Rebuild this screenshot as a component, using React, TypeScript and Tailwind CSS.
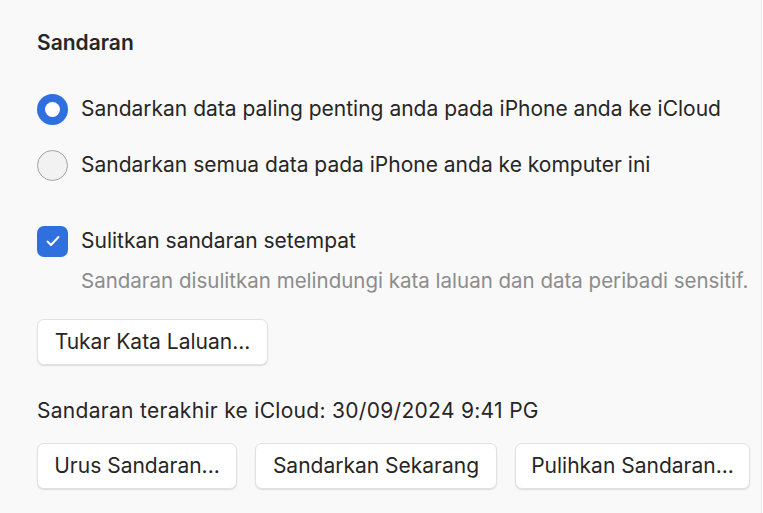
import React from "react";

function Radio({ checked }: { checked: boolean }) {
  if (checked) {
    return (
      <span className="flex h-[31px] w-[31px] shrink-0 items-center justify-center rounded-full bg-[#2f6fde]">
        <span className="h-[15px] w-[15px] rounded-full bg-white" />
      </span>
    );
  }
  return (
    <span className="h-[31px] w-[31px] shrink-0 rounded-full border-[1.5px] border-[#a3a3a3] bg-[#f2f2f2]" />
  );
}

function Button({ label, width }: { label: string; width: string }) {
  return (
    <button
      className={`h-[46px] shrink-0 whitespace-nowrap rounded-[7px] border border-[#e2e2e2] bg-white text-[21px] text-[#262626] shadow-[0_1px_1.5px_rgba(0,0,0,0.12)] ${width}`}
    >
      {label}
    </button>
  );
}

export default function App() {
  return (
    <div
      className="h-[513px] w-[762px] border-r border-[#e8e8e8] bg-[#f9f9f9] pl-[37px] text-[#262626]"
      style={{ fontFamily: "Inter, 'Noto Sans', sans-serif" }}
    >
      <div className="pt-[28px] text-[21px] font-semibold leading-[30px]">Sandaran</div>

      <div className="mt-[35px] flex h-[32px] items-center gap-[13px]">
        <Radio checked />
        <span className="text-[21px]">Sandarkan data paling penting anda pada iPhone anda ke iCloud</span>
      </div>

      <div className="mt-[24px] flex h-[32px] items-center gap-[13px]">
        <Radio checked={false} />
        <span className="text-[21px]">Sandarkan semua data pada iPhone anda ke komputer ini</span>
      </div>

      <div className="mt-[44px] flex h-[32px] items-center gap-[13px]">
        <span className="flex h-[31px] w-[31px] shrink-0 items-center justify-center rounded-[7px] bg-[#2f6fde]">
          <svg width="18" height="18" viewBox="0 0 18 18" fill="none">
            <path d="M3.5 9.5l3.5 3.5 7.5-8" stroke="white" strokeWidth="2" strokeLinecap="round" strokeLinejoin="round" />
          </svg>
        </span>
        <span className="text-[21px]">Sulitkan sandaran setempat</span>
      </div>

      <div className="mt-[10px] pl-[44px] text-[20.5px] leading-[28px] text-[#8c8c8c]">
        Sandaran disulitkan melindungi kata laluan dan data peribadi sensitif.
      </div>

      <div className="mt-[24px]">
        <Button label="Tukar Kata Laluan..." width="w-[231px]" />
      </div>

      <div className="mt-[32px] text-[21px] leading-[28px] tracking-[0.3px]">
        Sandaran terakhir ke iCloud: 30/09/2024 9:41 PG
      </div>

      <div className="mt-[18px] flex gap-[18px]">
        <Button label="Urus Sandaran..." width="w-[200px]" />
        <Button label="Sandarkan Sekarang" width="w-[242px]" />
        <Button label="Pulihkan Sandaran..." width="w-[235px]" />
      </div>
    </div>
  );
}
